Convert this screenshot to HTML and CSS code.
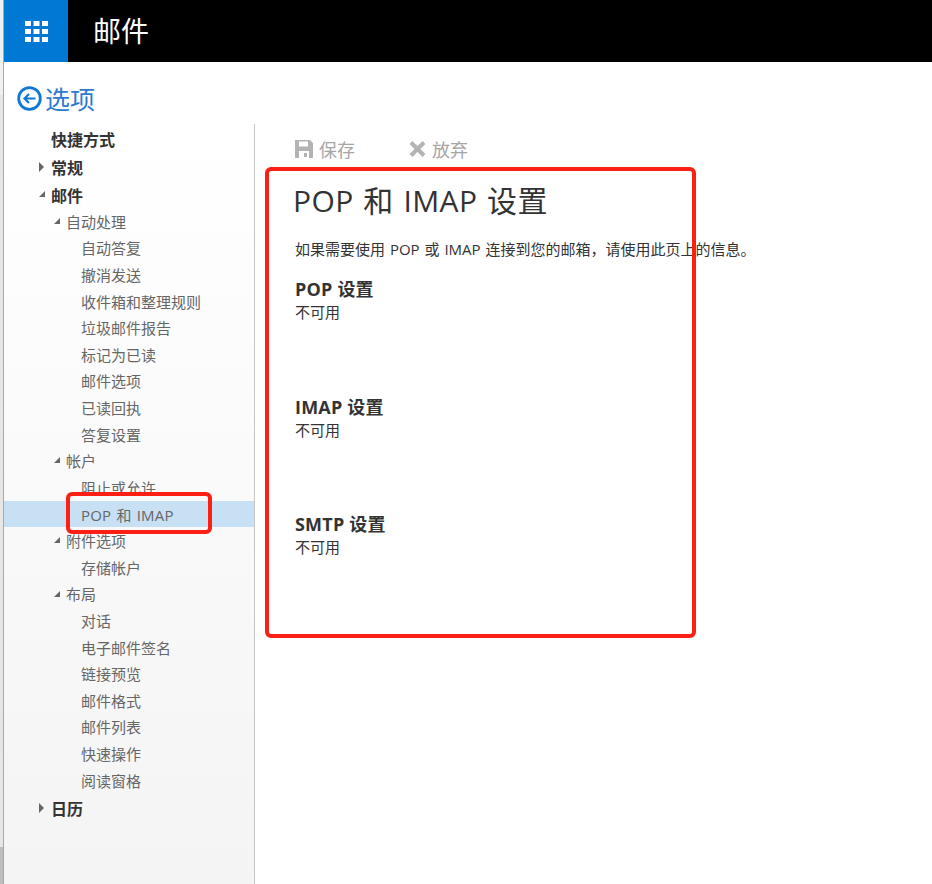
FILE: index.html
```html
<!DOCTYPE html>
<html lang="zh-CN">
<head>
<meta charset="utf-8">
<title>POP 和 IMAP 设置</title>
<link rel="stylesheet" href="styles.css">
</head>
<body>
<div class="edge"></div>
<div class="app">
  <header class="topbar">
    <div class="launcher">
      <svg width="23" height="21" viewBox="0 0 23 21"><g fill="#fff">
        <rect x="0" y="0" width="6" height="5"/><rect x="8.500" y="0" width="6" height="5"/><rect x="17" y="0" width="6" height="5"/>
        <rect x="0" y="8" width="6" height="5"/><rect x="8.500" y="8" width="6" height="5"/><rect x="17" y="8" width="6" height="5"/>
        <rect x="0" y="16" width="6" height="5"/><rect x="8.500" y="16" width="6" height="5"/><rect x="17" y="16" width="6" height="5"/>
      </g></svg>
    </div>
    <div class="apptitle">邮件</div>
  </header>
  <div class="options">
    <svg class="back" width="25" height="25" viewBox="0 0 25 25"><circle cx="12.500" cy="12.500" r="10.800" fill="none" stroke="#0f78d4" stroke-width="2.800"/><path d="M18.500 12.500H7.500M12 8l-4.500 4.500L12 17" fill="none" stroke="#0f78d4" stroke-width="2.200"/></svg>
    <span>选项</span>
  </div>
  <div class="body">
    <nav class="sidebar">
      <div class="l1">快捷方式</div>
      <div class="l1"><span class="arrow closed"></span>常规</div>
      <div class="l1 expanded"><span class="arrow open"></span>邮件</div>
      <div class="l2"><span class="arrow open"></span>自动处理</div>
      <div class="l3">自动答复</div>
      <div class="l3">撤消发送</div>
      <div class="l3">收件箱和整理规则</div>
      <div class="l3">垃圾邮件报告</div>
      <div class="l3">标记为已读</div>
      <div class="l3">邮件选项</div>
      <div class="l3">已读回执</div>
      <div class="l3">答复设置</div>
      <div class="l2"><span class="arrow open"></span>帐户</div>
      <div class="l3">阻止或允许</div>
      <div class="l3 selected">POP 和 IMAP</div>
      <div class="l2"><span class="arrow open"></span>附件选项</div>
      <div class="l3">存储帐户</div>
      <div class="l2"><span class="arrow open"></span>布局</div>
      <div class="l3">对话</div>
      <div class="l3">电子邮件签名</div>
      <div class="l3">链接预览</div>
      <div class="l3">邮件格式</div>
      <div class="l3">邮件列表</div>
      <div class="l3">快速操作</div>
      <div class="l3">阅读窗格</div>
      <div class="l1 last"><span class="arrow closed"></span>日历</div>
    </nav>
    <main class="content">
      <div class="toolbar">
        <div class="tool">
          <svg width="18" height="18" viewBox="0 0 18 18"><path fill="#b3b3b3" fill-rule="evenodd" d="M0 0h15l3 3v15H0zM4 1.500v5h9v-5zM4 11v7h10v-7zM9 13h3v4H9z"/></svg>
          <span>保存</span>
        </div>
        <div class="tool">
          <svg width="17" height="16" viewBox="0 0 17 16"><path fill="none" stroke="#b3b3b3" stroke-width="4" d="M2 1.500l13 13M15 1.500l-13 13"/></svg>
          <span>放弃</span>
        </div>
      </div>
      <h1>POP 和 IMAP 设置</h1>
      <p class="intro">如果需要使用 POP 或 IMAP 连接到您的邮箱，请使用此页上的信息。</p>
      <section class="group">
        <h2>POP 设置</h2>
        <p>不可用</p>
      </section>
      <section class="group">
        <h2>IMAP 设置</h2>
        <p>不可用</p>
      </section>
      <section class="group">
        <h2>SMTP 设置</h2>
        <p>不可用</p>
      </section>
    </main>
  </div>
</div>
<div class="mark mark-nav"></div>
<div class="mark mark-main"></div>
</body>
</html>
```
FILE: styles.css
```css
* { box-sizing: border-box; }
html, body { margin: 0; height: 100%; }
body {
  display: flex;
  height: 884px;
  overflow: hidden;
  background: #fff;
  font-family: "Open Sans", "Noto Sans CJK SC", sans-serif;
  color: #333;
}
.edge {
  width: 4px;
  flex: none;
  border-right: 1px solid #a8a8a8;
  background: linear-gradient(#f0f0f0 0 95px, #e6e6e6 95px 847px, #bdbdbd 847px);
}
.app { flex: 1; display: flex; flex-direction: column; min-width: 0; }
.topbar { height: 62px; background: #000; display: flex; align-items: center; flex: none; }
.launcher { width: 64px; height: 62px; background: #0078d4; display: flex; align-items: center; justify-content: center; }
.apptitle { margin-left: 25px; color: #fff; font-size: 28px; line-height: 62px; }
.options { height: 62px; flex: none; display: flex; align-items: center; gap: 3px; padding-left: 13px; padding-top: 10px; color: #2b79d1; font-size: 25px; }
.body { flex: 1; display: flex; min-height: 0; }
.sidebar {
  width: 251px;
  flex: none;
  border-right: 1px solid #c6c6c6;
  background: linear-gradient(#fff, #f4f4f4);
  padding-top: 1px;
}
.l1 { position: relative; height: 28px; padding-left: 47px; font-size: 16px; font-weight: 700; color: #333; display: flex; align-items: center; }
.l1.expanded { margin-bottom: -1px; }
.l1.last { margin-top: 1px; }
.l2, .l3 { height: 26.620px; font-size: 15px; color: #666; display: flex; align-items: center; white-space: pre; }
.l2 { position: relative; padding-left: 62px; }
.l3 { padding-left: 77px; }
.selected { background: #c7e0f4; letter-spacing: .2px; word-spacing: 1px; }
.arrow { position: absolute; width: 0; height: 0; }
.l1 .arrow { left: 35px; }
.l2 .arrow { left: 50px; }
.arrow.closed { top: 9px; border-left: 5px solid #666; border-top: 5px solid transparent; border-bottom: 5px solid transparent; }
.arrow.open { top: 10px; border-right: 6px solid #666; border-top: 6px solid transparent; }
.content { flex: 1; padding-left: 40px; min-width: 0; }
.toolbar { display: flex; gap: 54px; height: 26px; margin-top: 12px; align-items: center; color: #a6a6a6; font-size: 18px; }
.tool { display: flex; align-items: center; gap: 6px; }
h1 { margin: 18px 0 0 -2px; font-size: 30px; line-height: 42px; font-weight: 400; color: #333; letter-spacing: .4px; word-spacing: 1.500px; }
.intro { margin: 17px 0 0; font-size: 15px; line-height: 20px; color: #333; word-spacing: 1px; }
.group { height: 117.500px; }
.intro + .group { margin-top: 18px; }
h2 { margin: 0; font-size: 18px; line-height: 24px; font-weight: 700; color: #333; letter-spacing: .2px; }
.group p { margin: 0; font-size: 15px; line-height: 22px; color: #333; }
.mark { position: absolute; border: 4px solid #fb1f14; border-radius: 6px; }
.mark-nav { left: 66px; top: 492px; width: 146px; height: 42px; }
.mark-main { left: 265px; top: 167px; width: 431px; height: 471px; }
```
